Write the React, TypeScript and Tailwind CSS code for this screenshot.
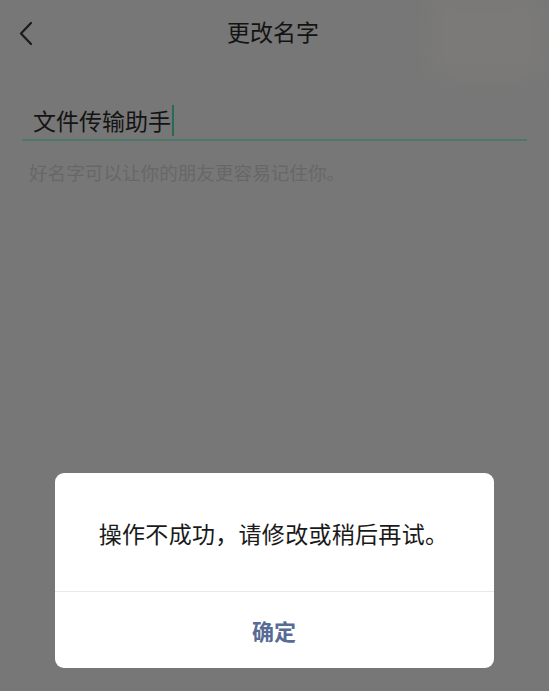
import React from "react";

export default function App() {
  return (
    <div
      className="relative w-[549px] h-[691px] bg-[#777777] overflow-hidden flex flex-col"
      style={{ fontFamily: '"Noto Sans CJK SC", "Noto Sans", sans-serif' }}
    >
      <div className="absolute right-[8px] top-[0px] w-[110px] h-[75px] bg-[#7d7c79] blur-[10px] opacity-70" />
      {/* header */}
      <div className="relative h-[64px] flex items-center justify-center">
        <svg
          className="absolute left-[17px] top-[21px]"
          width="18"
          height="26"
          viewBox="0 0 18 26"
          fill="none"
        >
          <path d="M14 2 L4 12.5 L14 23" stroke="#1b1b1b" strokeWidth="2.2" strokeLinecap="round" strokeLinejoin="round" />
        </svg>
        <span className="text-[23px] leading-none text-[#131313] mt-[-2px] ml-[-3px]">更改名字</span>
      </div>
      {/* input */}
      <div className="mx-[22px] mt-[38px] h-[39px] border-b-2 border-[#4d7766] flex items-start pl-[11px]">
        <span className="text-[23px] leading-none text-[#141414] mt-[7px]">文件传输助手</span>
        <span className="w-[2px] h-[31px] bg-[#2a6a53] ml-[1px] mt-[3px]" />
      </div>
      <div className="ml-[29px] mt-[22px] text-[18.6px] leading-none text-[#676767]">
        好名字可以让你的朋友更容易记住你。
      </div>
      {/* dialog */}
      <div className="absolute left-[55px] top-[473px] w-[439px] h-[195px] bg-white rounded-[9px] flex flex-col overflow-hidden">
        <div className="h-[119px] flex items-center justify-center border-b border-[#e8e8e8]">
          <span className="text-[23px] leading-none tracking-[0.3px] text-[#1a1a1a] mt-[2px] ml-[-2px]">操作不成功，请修改或稍后再试。</span>
        </div>
        <div className="flex-1 flex items-center justify-center">
          <span className="text-[22px] leading-none font-bold text-[#576b95] mt-[-1px] ml-[-1px]">确定</span>
        </div>
      </div>
    </div>
  );
}
